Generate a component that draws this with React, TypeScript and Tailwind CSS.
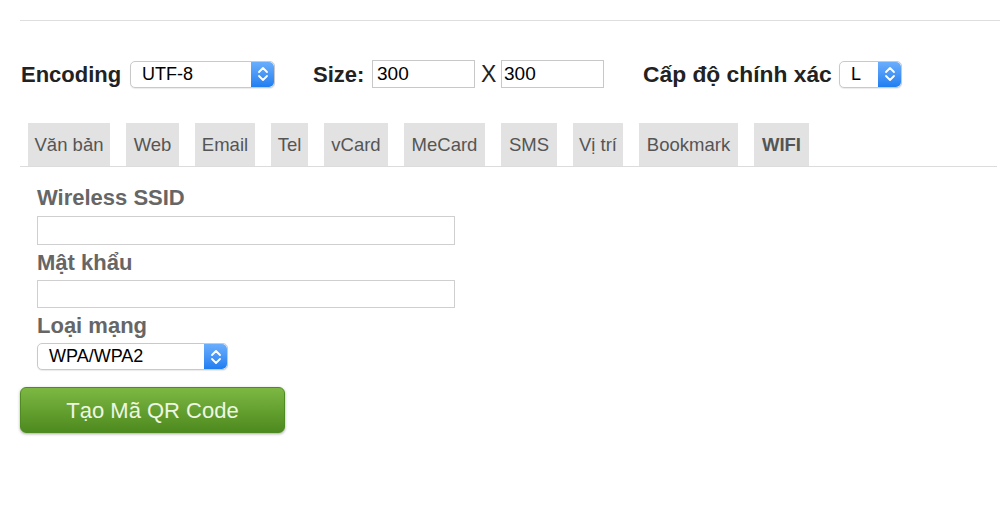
import React from "react";

function Stepper() {
  return (
    <div className="w-[23px] h-full flex items-center justify-center rounded-r-[5px] bg-gradient-to-b from-[#6aaefc] to-[#1f7ef1]">
      <svg width="12" height="18" viewBox="0 0 12 18" fill="none" stroke="white" strokeWidth="1.8" strokeLinecap="round" strokeLinejoin="round">
        <path d="M2 7 L6 3 L10 7" />
        <path d="M2 11 L6 15 L10 11" />
      </svg>
    </div>
  );
}

function MacSelect({ value, width }: { value: string; width: string }) {
  return (
    <div className={`${width} h-[27px] flex items-stretch rounded-[5px] border border-[#c9c9c9] bg-white shadow-[0_1px_1px_rgba(0,0,0,0.08)]`}>
      <div className="flex-1 flex items-center pl-[11px] text-[18px] text-black">{value}</div>
      <Stepper />
    </div>
  );
}

const tabs: { t: string; w: string }[] = [
  { t: "Văn bản", w: "w-[82px]" },
  { t: "Web", w: "w-[53px]" },
  { t: "Email", w: "w-[60px]" },
  { t: "Tel", w: "w-[37px]" },
  { t: "vCard", w: "w-[64px]" },
  { t: "MeCard", w: "w-[81px]" },
  { t: "SMS", w: "w-[56px]" },
  { t: "Vị trí", w: "w-[50px]" },
  { t: "Bookmark", w: "w-[99px]" },
  { t: "WIFI", w: "w-[55px]" },
];

export default function App() {
  return (
    <div
      className="w-[1000px] h-[520px] bg-white overflow-hidden"
      style={{ fontFamily: '"Liberation Sans", Arial, sans-serif' }}
    >
      <div className="pt-[20px] pl-[20px]">
        <div className="h-px bg-[#dedede]" />
      </div>

      <div className="flex items-center mt-[39px] h-[28px] text-[#222]">
        <span className="ml-[21px] w-[109px] text-[22px] font-bold">Encoding</span>
        <MacSelect value="UTF-8" width="w-[145px]" />
        <span className="ml-[38px] w-[59px] text-[22px] font-bold">Size:</span>
        <div className="w-[103px] h-[28px] border border-[#c8c8c8] flex items-center pl-[4px] text-[19px] text-black">300</div>
        <span className="ml-[6px] w-[20px] text-[23px] text-[#222]">X</span>
        <div className="w-[103px] h-[28px] border border-[#c8c8c8] flex items-center pl-[2px] text-[19px] text-black">300</div>
        <span className="ml-[39px] w-[196px] text-[22.8px] font-bold">Cấp độ chính xác</span>
        <MacSelect value="L" width="w-[63px]" />
      </div>

      <div className="mt-[35px] ml-[20px] w-[977px] border-b border-[#dcdcdc] pl-[8px] flex gap-[16px]">
        {tabs.map(({ t, w }) => (
          <div
            key={t}
            className={`${w} h-[43px] flex items-center justify-center bg-[#e2e2e2] text-[18.5px] text-[#555] ${t === "WIFI" ? "font-bold" : ""}`}
          >
            {t}
          </div>
        ))}
      </div>

      <div className="pl-[37px] pt-[19px] flex flex-col">
        <div className="text-[22px] leading-[24px] font-bold text-[#666]">Wireless SSID</div>
        <div className="mt-[6px] w-[418px] h-[29px] border border-[#cfcfcf] bg-white" />
        <div className="mt-[6px] text-[22px] leading-[24px] font-bold text-[#666]">Mật khẩu</div>
        <div className="mt-[5px] w-[418px] h-[28px] border border-[#cfcfcf] bg-white" />
        <div className="mt-[6px] text-[22px] leading-[24px] font-bold text-[#666]">Loại mạng</div>
        <div className="mt-[5px]">
          <MacSelect value="WPA/WPA2" width="w-[191px]" />
        </div>
      </div>

      <div className="mt-[17px] ml-[20px] w-[265px] h-[46px] rounded-[6px] border border-[#4f8a22] bg-gradient-to-b from-[#7db843] to-[#4d8a1d] shadow-[0_1px_3px_rgba(0,0,0,0.35)] flex items-center justify-center text-[22px] text-[#eef6e4]">
        Tạo Mã QR Code
      </div>
    </div>
  );
}
